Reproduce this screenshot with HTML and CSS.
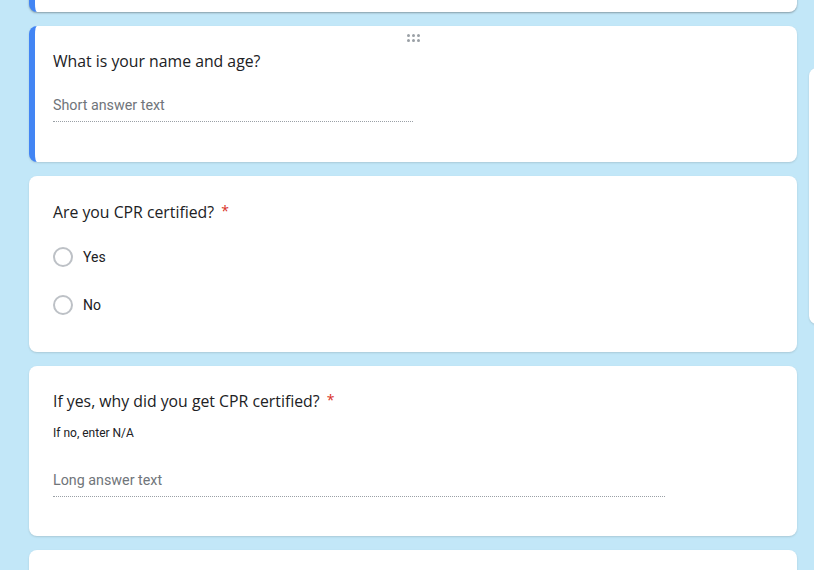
FILE: index.html
```html
<!DOCTYPE html>
<html>
<head>
<meta charset="utf-8">
<link rel="stylesheet" href="styles.css">
</head>
<body>
<div class="page">
  <div class="column">
    <div class="card card-top focused"></div>

    <div class="card focused q1">
      <div class="drag">
        <span></span><span></span><span></span>
        <span></span><span></span><span></span>
      </div>
      <div class="question">What is your name and age?</div>
      <div class="answer short">Short answer text</div>
    </div>

    <div class="card q2">
      <div class="question">Are you CPR certified? <span class="req">*</span></div>
      <div class="options">
        <div class="option"><span class="radio"></span><span class="label">Yes</span></div>
        <div class="option"><span class="radio"></span><span class="label">No</span></div>
      </div>
    </div>

    <div class="card q3">
      <div class="question">If yes, why did you get CPR certified? <span class="req">*</span></div>
      <div class="help">If no, enter N/A</div>
      <div class="answer long">Long answer text</div>
    </div>

    <div class="card q4"></div>
  </div>
  <div class="side"></div>
</div>
</body>
</html>
```

FILE: styles.css
```css
html, body {
  margin: 0;
  padding: 0;
  background: #c2e7f8;
  height: 100%;
  overflow: hidden;
}

.page {
  display: flex;
  align-items: flex-start;
  padding-left: 29px;
}

.column {
  width: 768px;
  flex-shrink: 0;
  display: flex;
  flex-direction: column;
  gap: 14px;
}

.card {
  position: relative;
  background: #fff;
  border-radius: 8px;
  box-shadow: 0 1px 2px rgba(60, 64, 67, 0.18);
  padding: 0 24px;
  box-sizing: border-box;
  font-family: "Roboto", "Liberation Sans", sans-serif;
  color: #202124;
}

.focused {
  border-left: 6px solid #4285f4;
  padding-left: 18px;
}

.card-top {
  margin-top: -40px;
  height: 52px;
  box-shadow: 0 1px 2px rgba(60, 64, 67, 0.45);
}

.q1 {
  height: 136px;
  padding-top: 25px;
}

.drag {
  position: absolute;
  top: 8px;
  left: 372px;
  width: 12px;
  display: grid;
  grid-template-columns: repeat(3, 3px);
  gap: 2px 2px;
}

.drag span {
  width: 3px;
  height: 3px;
  border-radius: 50%;
  background: #9aa0a6;
}

.question {
  font-family: "Open Sans", "Noto Sans", sans-serif;
  font-size: 15.8px;
  line-height: 20px;
  color: #202124;
}

.req {
  color: #d93025;
  margin-left: 3px;
  font-size: 14px;
  vertical-align: 2px;
}

.answer {
  font-size: 14.3px;
  color: #70757a;
  line-height: 20px;
  border-bottom: 1px dotted #9aa0a6;
  padding-bottom: 6px;
}

.short {
  width: 360px;
  margin-top: 24px;
}

.q2 {
  height: 176px;
  padding-top: 25px;
}

.options {
  margin-top: 25px;
  display: flex;
  flex-direction: column;
  gap: 28px;
}

.option {
  display: flex;
  align-items: center;
  height: 20px;
}

.radio {
  width: 16px;
  height: 16px;
  border: 2px solid #bdc1c6;
  border-radius: 50%;
}

.label {
  margin-left: 10px;
  font-size: 14px;
  color: #202124;
}

.q3 {
  height: 170px;
  padding-top: 24px;
}

.help {
  margin-top: 14px;
  font-size: 12px;
  line-height: 16px;
  color: #202124;
}

.long {
  width: 612px;
  margin-top: 29px;
}

.q4 {
  height: 60px;
}

.side {
  margin-left: 12px;
  margin-top: 68px;
  width: 40px;
  height: 256px;
  background: #fff;
  border-radius: 8px;
  box-shadow: 0 1px 2px rgba(60, 64, 67, 0.2);
  flex-shrink: 0;
}
```
